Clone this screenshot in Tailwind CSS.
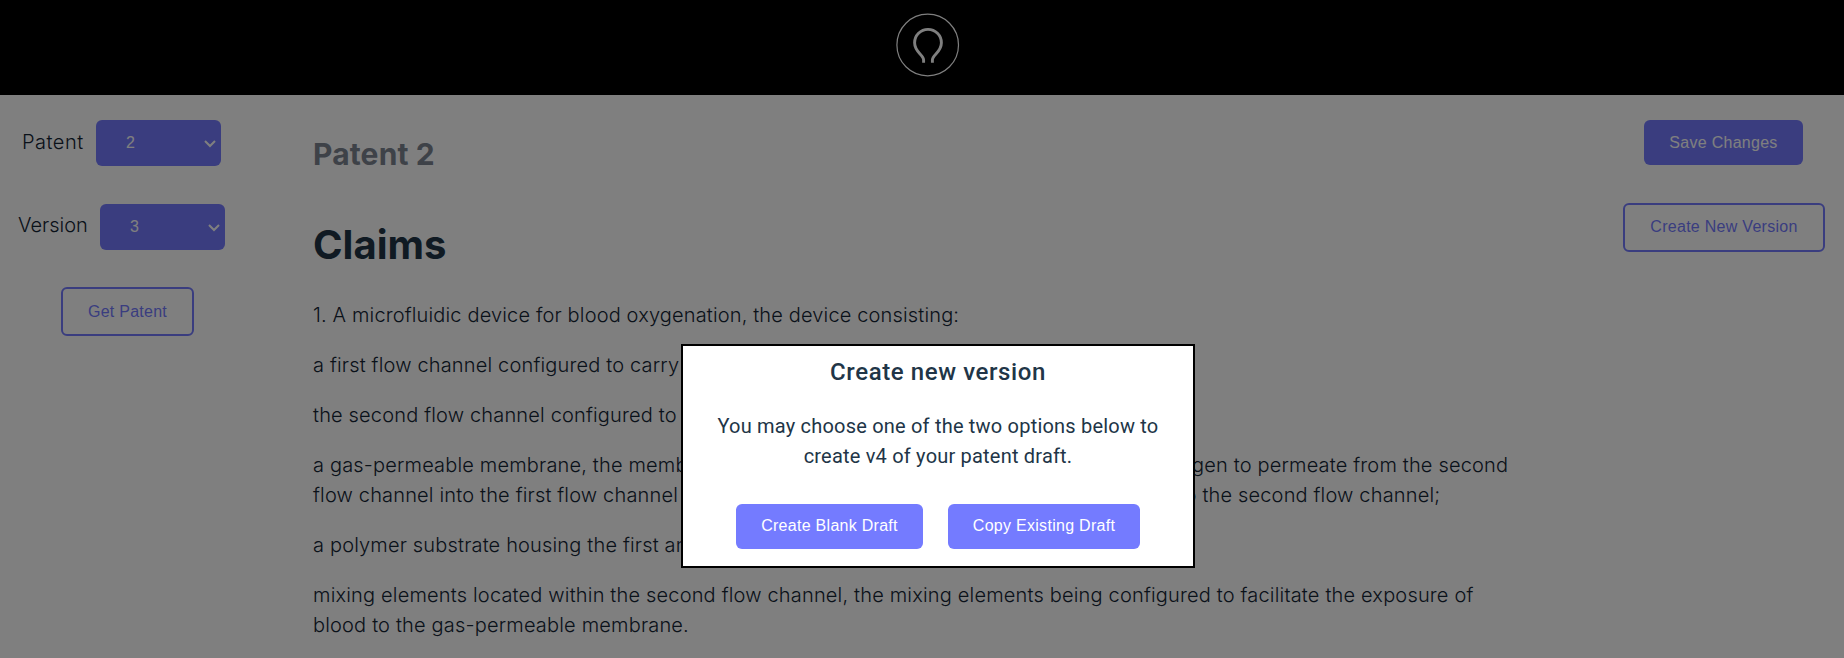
<!DOCTYPE html>
<html lang="en">
<head>
<meta charset="utf-8">
<title>Patent editor</title>
<script src="https://cdn.jsdelivr.net/npm/@tailwindcss/browser@4"></script>
</head>
<body class="h-[658px] w-[1844px] overflow-hidden bg-white font-['Inter',sans-serif] text-[#213547]">
<header class="flex h-[95px] justify-center bg-black pl-[11px]">
  <svg class="mt-[13px] h-16 w-16" viewBox="0 0 64 64" fill="none" stroke="#fff">
    <circle cx="31.7" cy="32" r="30.8" stroke-width="1.2"/>
    <path stroke-width="2.9" d="M27.6 49.8V47C27.6 41.5 18.6 39.5 18.6 29.8A13.4 13.4 0 0 1 45.4 29.8C45.4 39.5 36.4 41.5 36.4 47V49.8"/>
  </svg>
</header>
<main class="flex">
  <aside class="flex w-[256px] shrink-0 flex-col pt-[25px] text-[20px] font-light text-[#142535]">
    <div class="flex h-[46px] pl-[22px]">
      <label class="w-[74px] pt-[7px] leading-[30px] tracking-[0.5px]">Patent</label>
      <div class="flex h-[46px] w-[125px] items-center justify-between rounded-md bg-[#747bff] pr-[5px] pl-[30px] font-['Liberation_Sans',sans-serif] text-base font-normal text-white"><span>2</span>
        <svg class="mt-0.5 h-3 w-3" viewBox="0 0 12 12" fill="none" stroke="#fff" stroke-width="2"><path d="M1 3L6 8L11 3"/></svg></div>
    </div>
    <div class="mt-[38px] flex h-[46px] pl-[18px]">
      <label class="w-[82px] pt-[6px] leading-[30px]">Version</label>
      <div class="flex h-[46px] w-[125px] items-center justify-between rounded-md bg-[#747bff] pr-[5px] pl-[30px] font-['Liberation_Sans',sans-serif] text-base font-normal text-white"><span>3</span>
        <svg class="mt-0.5 h-3 w-3" viewBox="0 0 12 12" fill="none" stroke="#fff" stroke-width="2"><path d="M1 3L6 8L11 3"/></svg></div>
    </div>
    <button class="mt-[37px] ml-[61px] h-[49px] w-[133px] rounded-md border-2 border-[#747bff] font-['Liberation_Sans',sans-serif] text-base font-normal tracking-[0.25px] text-[#747bff]">Get Patent</button>
  </aside>
  <section class="w-[1268px] shrink-0 pr-[2px] pl-[57px] pt-[37px]">
    <h2 class="text-[30px] leading-[45px] font-bold tracking-[0.15px] text-[#7d8491]">Patent 2</h2>
    <h1 class="mt-[38px] text-[40px] leading-[60px] font-bold">Claims</h1>
    <div class="mt-[25px] flex flex-col gap-5 text-[20px] leading-[30px] font-light tracking-[0.165px] whitespace-nowrap text-[#142535]">
      <p class="tracking-[0.15px]">1. A microfluidic device for blood oxygenation, the device consisting:</p>
      <p>a first flow channel configured to carry blood;</p>
      <p>the second flow channel configured to carry gas;</p>
      <p>a gas-permeable membrane, the membrane <span class="tracking-[-0.34px]">being positioned and configured so as to allow</span> oxygen to permeate from the second<br>flow channel into the first flow channel <span class="tracking-[0px]">while allowing the carbon dioxide gas to pass back</span> into the second flow channel;</p>
      <p>a polymer substrate housing the first and</p>
      <p class="tracking-[0.175px]">mixing elements located within the second flow channel, the mixing elements being configured to facilitate the exposure of<br>blood to the gas-permeable membrane.</p>
    </div>
  </section>
  <aside class="flex w-[320px] flex-col pt-[25px] font-['Liberation_Sans',sans-serif] text-base tracking-[0.28px]">
    <button class="ml-[120px] h-[45px] w-[159px] rounded-md bg-[#747bff] text-white">Save Changes</button>
    <button class="mt-[38px] ml-[99px] h-[49px] w-[202px] rounded-md border-2 border-[#747bff] pb-0.5 text-[#747bff]">Create New Version</button>
  </aside>
</main>
<div class="fixed inset-0 bg-black/50"></div>
<div class="fixed top-[344px] left-[681px] flex h-[224px] w-[514px] flex-col items-center border-2 border-black bg-white pt-[8px] text-center font-['Roboto',sans-serif]">
  <h3 class="text-[24px] leading-[36px] font-medium tracking-[0.6px]">Create new version</h3>
  <p class="mt-[21px] text-[20px] leading-[30px] tracking-[0.2px]">You may choose one of the two options below to<br>create v4 of your patent draft.</p>
  <div class="mt-[33px] flex gap-[25px] font-['Liberation_Sans',sans-serif] text-base tracking-[0.28px] text-white">
    <button class="h-[45px] w-[187px] rounded-md bg-[#747bff] pb-0.5">Create Blank Draft</button>
    <button class="h-[45px] w-[192px] rounded-md bg-[#747bff] pb-0.5">Copy Existing Draft</button>
  </div>
</div>
</body>
</html>
